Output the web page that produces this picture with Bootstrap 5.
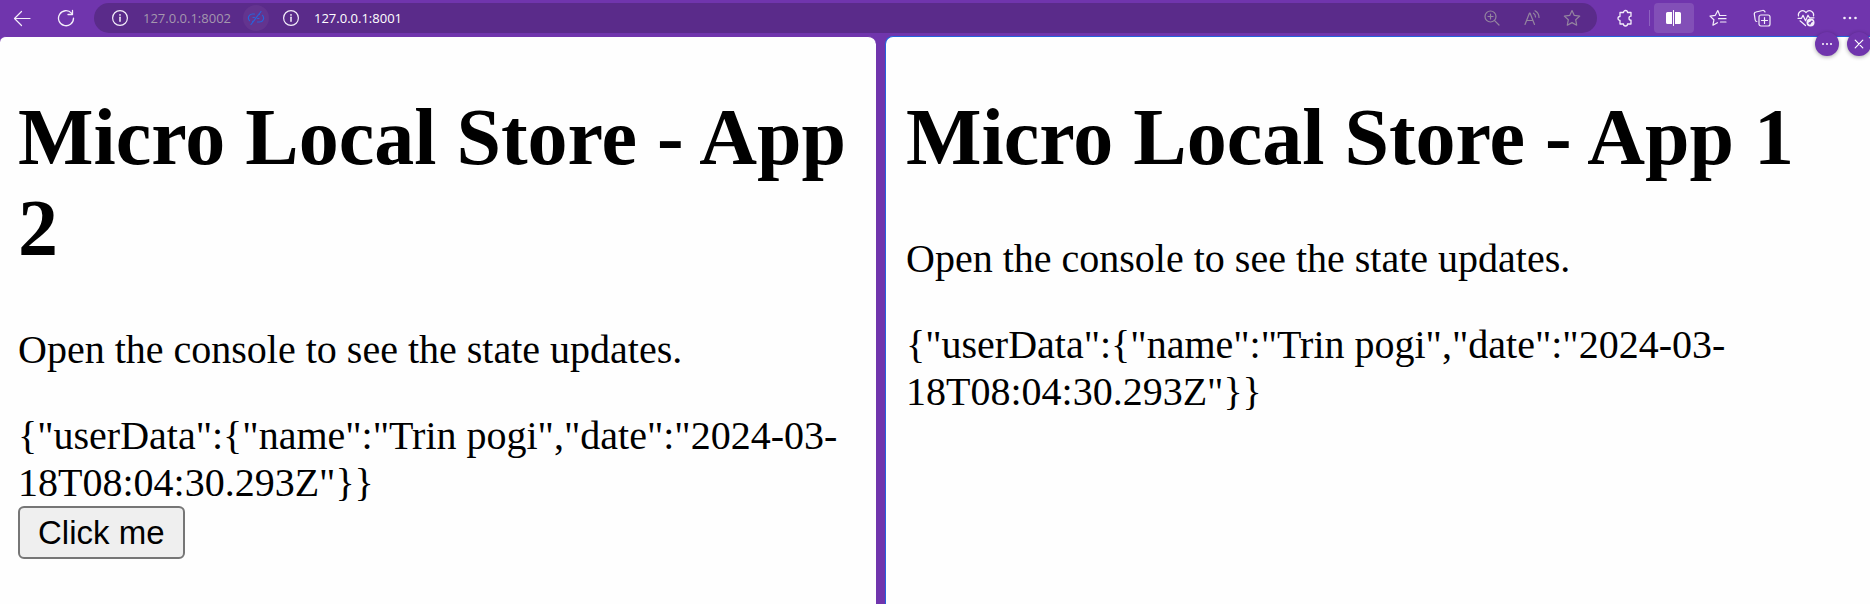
<!DOCTYPE html>
<html lang="en">
<head>
<meta charset="utf-8">
<meta name="viewport" content="width=device-width, initial-scale=1">
<title>Micro Local Store</title>
<link href="https://cdn.jsdelivr.net/npm/bootstrap@5.3.0/dist/css/bootstrap.min.css" rel="stylesheet">
<style>
  :root { --chrome: #7035ad; --field: #5a2b8a; --focus-blue: #2563dc; --page: #fefefe; }
  body { background: var(--chrome); font-family: "Open Sans", "Noto Sans", sans-serif; }
  svg { display: block; fill: none; stroke: currentColor; stroke-linecap: round; stroke-linejoin: round; }
  .toolbar { height: 36px; color: #f4eefa; }
  .tool { width: 40px; height: 30px; padding: 0; border: 0; background: none; color: inherit; border-radius: 4px;
          display: flex; align-items: center; justify-content: center; flex: none; }
  .tool-wide { width: 44px; }
  .tool-on { background: #824fb7; color: #fff; }
  .divider { width: 1px; height: 16px; background: #8e62c0; }
  .address { height: 30px; background: var(--field); border-radius: 15px; margin: 0 8px 0 6px; padding: 0 5px 0 18px; min-width: 0; }
  .site-info { width: 16px; }
  .url { width: 100px; margin-left: 15px; padding: 0; border: 0; background: none; outline: 0; font-size: 13px; line-height: 20px; color: #fff; }
  .url-dim { color: #a497ae; }
  .unlink { width: 26px; height: 26px; border-radius: 50%; background: #63348f; color: #2a62d8; margin-right: 14px; }
  .dim { color: #94849f; }
  .panes { display: grid; grid-template-columns: 876fr 985fr; gap: 9px; }
  .pane { background: var(--page); color: #000; border-top: 1px solid var(--chrome); padding: 55px 20px 20px 18px;
          font-family: "Liberation Serif", serif; font-size: 40px; line-height: 47px; min-width: 0; }
  .pane-left { border-radius: 6px 8px 0 0; }
  .pane-right { border-top-color: var(--focus-blue); border-left: 1px solid var(--focus-blue);
                border-radius: 8px 0 0 0; padding-left: 20px; }
  .pane h1 { font-size: 80px; line-height: 91px; font-weight: 700; margin: 0 0 52px; }
  .pane p { margin: 0 0 39px; }
  .click { display: block; font: 33px/39px "Liberation Sans", sans-serif; color: #000; background: #efefef;
           border: 2px solid #767676; border-radius: 6px; padding: 5px 18px; }
  .pane-tools { top: -5px; right: -1px; gap: 8px; }
  .round { width: 24px; height: 24px; border-radius: 50%; background: var(--chrome); color: #fff; box-shadow: 0 1px 4px #0005; }
</style>
</head>
<body class="vh-100 d-flex flex-column overflow-hidden">
<header class="toolbar d-flex align-items-center flex-shrink-0">
  <button class="tool tool-wide" aria-label="Back"><svg width="18" height="18" viewBox="0 0 18 18" stroke-width="1.2"><path d="M17 9.5H1.5M8.500 2.500 1.500 9.500l7 7"/></svg></button>
  <button class="tool tool-wide" aria-label="Refresh"><svg width="18" height="18" viewBox="0 0 18 18" stroke-width="1.300"><path d="M16.500 9.200A7.500 7.500 0 1 1 14.500 4.100M15.500 1.500v4h-4.500"/></svg></button>
  <div class="address d-flex align-items-center flex-grow-1">
    <button class="tool site-info" aria-label="Site information, left page"><svg width="16" height="16" viewBox="0 0 16 16" stroke-width="1.200"><circle cx="8" cy="8" r="7.400"/><path d="M8 7.300v4" stroke-width="1.500"/><path d="M8 4.800v.1" stroke-width="1.700"/></svg></button>
    <input class="url url-dim" type="text" value="127.0.0.1:8002" aria-label="Left page address">
    <button class="tool unlink" aria-label="Unlink tabs"><svg width="18" height="16" viewBox="0 0 18 16" stroke-width="1.200"><path d="M7.500 4H5.500a4 4 0 0 0-3 6.700M7.500 7.500H6M6 11.300h-.5M10.500 12h2a4 4 0 0 0 3-6.700M10.500 8.500H12M12 4.300h.5M14 1.500 4 14.500"/></svg></button>
    <button class="tool site-info" aria-label="Site information, right page"><svg width="16" height="16" viewBox="0 0 16 16" stroke-width="1.200"><circle cx="8" cy="8" r="7.400"/><path d="M8 7.300v4" stroke-width="1.500"/><path d="M8 4.800v.1" stroke-width="1.700"/></svg></button>
    <input class="url flex-grow-1" type="text" value="127.0.0.1:8001" aria-label="Right page address">
    <button class="tool dim" aria-label="Zoom"><svg width="16" height="16" viewBox="0 0 16 16" stroke-width="1.200"><circle cx="6.500" cy="6.500" r="5.500"/><path d="m10.600 10.600 4.400 4.400M6.500 4v5M4 6.500h5"/></svg></button>
    <button class="tool dim" aria-label="Read aloud"><svg width="16" height="16" viewBox="0 0 16 16" stroke-width="1.200"><path d="M1 14.500 5.500 3h.5l4.500 11.500M2.700 10.500h6.100M9.500 3.200q2 1.200 2 3.800M11 .8q4 2.200 4 6.700"/></svg></button>
    <button class="tool dim" aria-label="Add to favorites"><svg width="18" height="18" viewBox="0 0 18 18" stroke-width="1.200"><path d="m9 1.500 2.300 4.900 5.400.7-4 3.700 1 5.400L9 13.600l-4.700 2.600 1-5.400-4-3.700 5.400-.7z"/></svg></button>
  </div>
  <div class="d-flex align-items-center gap-1">
    <button class="tool" aria-label="Extensions"><svg width="18" height="18" viewBox="0 0 18 18" stroke-width="1.300"><path d="M4 3.500h3.500a2 2 0 0 1 4 0H15V7.200a2 2 0 1 0 0 4V15h-3.500a2 2 0 0 1-4 0H4v-3.500a2 2 0 0 1 0-4z"/></svg></button>
    <span class="divider"></span>
    <button class="tool tool-on" aria-label="Split screen" aria-pressed="true"><svg width="16" height="18" viewBox="0 0 16 18"><path d="M6 3v12H1.500A1.500 1.500 0 0 1 0 13.500v-9A1.500 1.500 0 0 1 1.500 3zM9 3v12h4.500a1.500 1.500 0 0 0 1.500-1.500v-9A1.500 1.500 0 0 0 13.500 3z" fill="currentColor" stroke="none"/><path d="M7.500 1.500v15" stroke-width="1"/></svg></button>
    <button class="tool" aria-label="Favorites"><svg width="18" height="18" viewBox="0 0 18 18" stroke-width="1.200"><path d="M10.500 5.800 8.800 1.500 6.300 6.300l-5.300.8 3.900 3.700-1 5.400 4.500-2.500M10.500 6.500H17M9.500 9.700H17M11.500 13H17"/></svg></button>
    <button class="tool" aria-label="Collections"><svg width="18" height="18" viewBox="0 0 18 18" stroke-width="1.200"><rect x="6" y="6" width="11" height="11" rx="2"/><path d="M11.500 8.500v6M8.500 11.500h6M3.800 12.500A1.800 1.800 0 0 1 2.200 11L1.300 5.200A2 2 0 0 1 3 3l6.500-1.500A2 2 0 0 1 12 3"/></svg></button>
    <button class="tool" aria-label="Browser essentials"><svg width="18" height="18" viewBox="0 0 18 18" stroke-width="1.200"><path d="M1.500 7C.5 3 5 .3 8 2.600l1 1 1-1c3-2.300 7.500.4 6.500 4.400M1 9.300h3.500l1.500-3 2.500 5.500L11 6.200l1.500 2.600H17M3 11.800l5.500 4.700"/><circle cx="13.500" cy="13.500" r="4" fill="currentColor" stroke="none"/><path d="m11.800 14.200 3.400-1.800M12.800 15.200l1.800-3" stroke="#7035ad"/></svg></button>
    <button class="tool" aria-label="Settings and more"><svg width="16" height="4" viewBox="0 0 16 4"><g fill="currentColor" stroke="none"><circle cx="2.500" cy="2" r="1.300"/><circle cx="8" cy="2" r="1.300"/><circle cx="13.500" cy="2" r="1.300"/></g></svg></button>
  </div>
</header>
<div class="panes flex-grow-1">
  <main class="pane pane-left">
    <h1>Micro Local Store - App 2</h1>
    <p>Open the console to see the state updates.</p>
    <div>{"userData":{"name":"Trin pogi","date":"2024-03-18T08:04:30.293Z"}}</div>
    <button class="click">Click me</button>
  </main>
  <section class="pane pane-right position-relative">
    <div class="pane-tools position-absolute d-flex">
      <button class="tool round" aria-label="More options"><svg width="12" height="4" viewBox="0 0 12 4"><g fill="currentColor" stroke="none"><circle cx="2" cy="2" r="1"/><circle cx="6" cy="2" r="1"/><circle cx="10" cy="2" r="1"/></g></svg></button>
      <button class="tool round" aria-label="Close pane"><svg width="10" height="10" viewBox="0 0 10 10" stroke-width="1.200"><path d="m1.200 1.200 7.600 7.600M8.800 1.200 1.200 8.800"/></svg></button>
    </div>
    <h1>Micro Local Store - App 1</h1>
    <p>Open the console to see the state updates.</p>
    <div>{"userData":{"name":"Trin pogi","date":"2024-03-18T08:04:30.293Z"}}</div>
  </section>
</div>
<script src="https://cdn.jsdelivr.net/npm/bootstrap@5.3.0/dist/js/bootstrap.bundle.min.js"></script>
</body>
</html>
